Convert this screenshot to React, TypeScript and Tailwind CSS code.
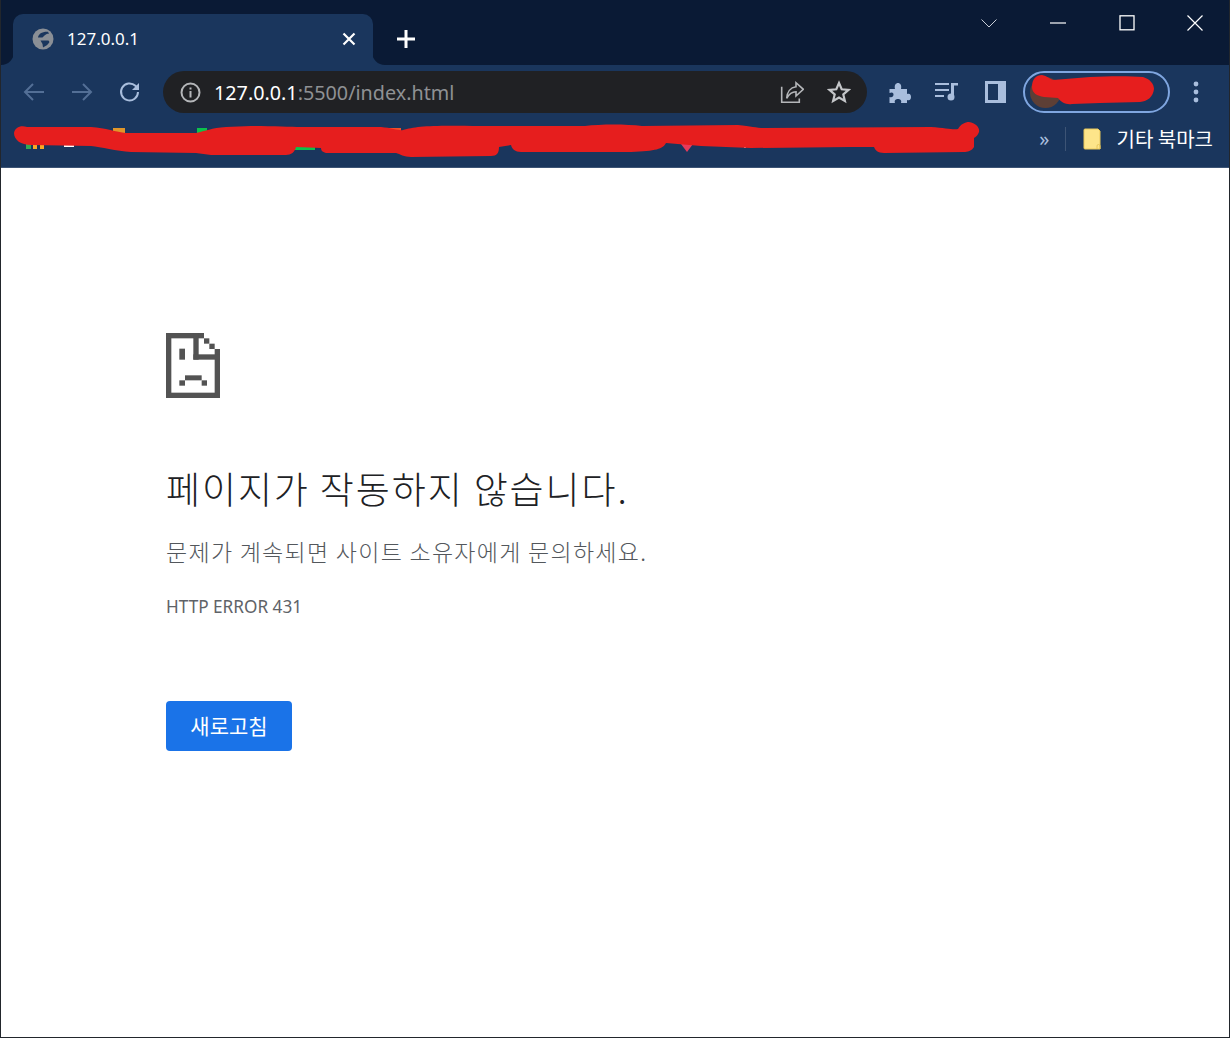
const latin = "font-['Noto_Sans','Noto_Sans_CJK_KR',sans-serif]"
const korean = "font-['Noto_Sans_CJK_KR','Noto_Sans',sans-serif]"

const TabCorner = ({ flip }: { flip?: boolean }) => (
  <svg width="13" height="13" viewBox="0 0 13 13" className="self-end shrink-0">
    <path d={flip ? "M0 0V13H13A13 13 0 0 1 0 0Z" : "M13 0V13H0A13 13 0 0 0 13 0Z"} fill="#1a365d" />
  </svg>
)

const Scribble = () => (
  <svg className="absolute left-0 top-0 pointer-events-none" width="1000" height="53" viewBox="0 115 1000 53">
    <rect x="25" y="144" width="5" height="5" fill="#34a853" />
    <rect x="32" y="144" width="4" height="5" fill="#f9a825" />
    <rect x="39" y="144" width="4" height="5" fill="#f9a825" />
    <rect x="63" y="143" width="10" height="4" fill="#fff" />
    <rect x="112" y="128" width="12" height="6" fill="#e0962a" />
    <rect x="196" y="128" width="10" height="6" fill="#0cc24c" />
    <rect x="294" y="142" width="20" height="8" fill="#0cc24c" />
    <rect x="388" y="128" width="12" height="9" fill="#f0502a" />
    <path d="M680 144h12l-6 8z" fill="#e83a5a" />
    <rect x="743" y="146" width="2" height="2" fill="#fff" />
    <path
      fill="#e61e1e"
      d="M13 133C14 127 20 125 26 127L90 127C105 128 115 132 125 133L195 133C205 131 210 128 225 127L250 126C270 126 290 127 300 127L380 127C392 128 398 131 402 130C415 126 430 125 480 126L584 126C600 124 625 124 641 126L737 125C750 126 755 128 763 128L930 127C945 128 952 130 957 129C960 124 964 122 968 122C975 123 979 128 978 132C977 135 975 137 973 138L973 147C971 151 966 152 963 152L883 153C877 153 874 150 873 147L850 147L750 148L700 146L665 143C662 149 655 151 630 152L520 152C514 152 511 149 510 145L498 147C498 153 496 156 490 156L410 157C403 157 399 154 395 153L325 153C321 152 320 150 320 148L295 147C294 152 290 155 285 155L210 155L195 153L130 152C115 151 100 147 90 146L30 145C20 145 13 140 13 133Z"
    />
  </svg>
)

const SadFile = () => (
  <svg width="54" height="65" viewBox="0 0 162 195" fill="#535353">
    <rect x="0" y="0" width="16" height="195" />
    <rect x="0" y="179" width="162" height="16" />
    <rect x="146" y="48" width="16" height="147" />
    <rect x="0" y="0" width="114" height="16" />
    <rect x="82" y="0" width="16" height="80" />
    <rect x="82" y="64" width="80" height="16" />
    <rect x="114" y="16" width="16" height="16" />
    <rect x="130" y="32" width="16" height="16" />
    <rect x="40" y="47" width="17" height="33" />
    <rect x="57" y="127" width="50" height="15" />
    <rect x="40" y="142" width="17" height="16" />
    <rect x="107" y="142" width="16" height="16" />
  </svg>
)

export default function App() {
  return (
    <div className="h-[1038px] w-[1230px] flex flex-col bg-white border-x border-b border-[#22262c] overflow-hidden">
      {/* tab strip */}
      <div className="h-[65px] shrink-0 bg-[#0a1a35] flex items-end text-white">
        <TabCorner />
        <div className={`h-[51px] w-[360px] shrink-0 -mx-px flex items-center bg-[#1a365d] rounded-t-[10px] pl-[19px] pr-[17px] pb-[2px] ${latin}`}>
          <svg width="22" height="22" viewBox="0 0 22 22">
            <circle cx="11" cy="11" r="10.5" fill="#8a8f96" />
            <path d="M6 9.500C6.500 6 10 3.500 16 3.800L17 5.800C13.500 5.800 12.500 8 10.500 9.500zM8.500 12.500H16.500L17.500 14C16 16.500 14 18 11 19.500L10.500 16z" fill="#1a365d" />
          </svg>
          <span className="ml-[13px] text-[17px] leading-none">127.0.0.1</span>
          <svg className="ml-auto" width="14" height="14" viewBox="0 0 14 14" stroke="#fff" strokeWidth="2.2">
            <path d="M1.5 1.5l11 11M12.5 1.5l-11 11" />
          </svg>
        </div>
        <TabCorner flip />
        <svg className="ml-[12px] mb-[17px]" width="18" height="18" viewBox="0 0 18 18" stroke="#fff" strokeWidth="3">
          <path d="M9 0v18M0 9h18" />
        </svg>
        <div className="ml-auto self-start flex items-center mt-[15px] pr-[26px]">
          <svg width="16" height="9" viewBox="0 0 16 9" fill="none" stroke="#c9ced8" strokeWidth="1">
            <path d="M.5.5L8 8 15.5.5" />
          </svg>
          <svg className="ml-[53px]" width="16" height="16" viewBox="0 0 16 16" stroke="#fff" strokeWidth="1.2">
            <path d="M0 8h16" />
          </svg>
          <svg className="ml-[53px]" width="16" height="16" viewBox="0 0 16 16" fill="none" stroke="#fff" strokeWidth="1.3">
            <rect x="1" y=".8" width="14" height="14" />
          </svg>
          <svg className="ml-[52px]" width="16" height="16" viewBox="0 0 16 16" stroke="#fff" strokeWidth="1.2">
            <path d="M.5.5l15 15M15.5.5l-15 15" />
          </svg>
        </div>
      </div>

      {/* toolbar */}
      <div className="h-[50px] shrink-0 bg-[#1a365d] flex items-center pl-[21px] pt-[4px]">
        <svg width="24" height="24" viewBox="0 0 24 24" fill="none" stroke="#536f96" strokeWidth="2">
          <path d="M22 12H3M11 4l-8 8 8 8" />
        </svg>
        <svg className="ml-[24px]" width="24" height="24" viewBox="0 0 24 24" fill="none" stroke="#536f96" strokeWidth="2">
          <path d="M2 12h19M13 4l8 8-8 8" />
        </svg>
        <svg className="ml-[24px]" width="24" height="24" viewBox="0 0 24 24" fill="none">
          <path d="M20 12a8.5 8.5 0 1 1-2.6-6.2L19.5 8" stroke="#a9bedd" strokeWidth="2" />
          <path d="M21 3v7h-7z" fill="#a9bedd" />
        </svg>
        <div className="ml-[21px] w-[704px] h-[42px] rounded-full bg-[#202124] flex items-center pl-[17px] pr-[16px]">
          <svg width="21" height="21" viewBox="0 0 21 21" fill="none" stroke="#b4b6b9" strokeWidth="2">
            <circle cx="10.5" cy="10.5" r="9" />
            <path d="M10.5 9v6.500M10.500 5.500v2" />
          </svg>
          <span className={`ml-[13px] pt-[2px] text-[19.75px] leading-none text-[#8f9194] ${latin}`}>
            <span className="text-white">127.0.0.1</span>:5500/index.html
          </span>
          <svg className="ml-auto" width="24" height="24" viewBox="0 0 24 24" fill="none" stroke="#b4b6b9" strokeWidth="1.6">
            <path d="M1.700 6.700V22.300H19.300V18.500" />
            <path d="M6.700 18.300C7 12 10.500 7.500 16 6.700V2.700L23.300 9.300 16 16V11.700C12 11.700 9 14 6.700 18.300Z" />
          </svg>
          <svg className="ml-[23px]" width="24" height="24" viewBox="0 0 24 24" fill="none" stroke="#c4c6c9" strokeWidth="2.2">
            <path d="M12 3l2.700 6.300 6.800.6-5.200 4.500 1.600 6.600L12 17.500 6.100 21l1.600-6.600L2.500 9.900l6.800-.6z" />
          </svg>
        </div>
        <svg className="ml-[21px]" width="24" height="24" viewBox="0 0 24 24" fill="#a9bedd">
          <path d="M1.500 9h5.500c-1-4 1-6 3-6s4 2 3 6h6v5c3-1 4 1 4 3s-1 4-4 3v3h-6c1-3-1-4-3-4s-4 1-3 4H1.500v-6c3 1 4-1 4-2.500S4.500 11.500 1.500 13z" />
        </svg>
        <svg className="ml-[23px]" width="24" height="24" viewBox="0 0 24 24" fill="#a9bedd">
          <rect x="0" y="3" width="14" height="2" />
          <rect x="0" y="9" width="14" height="2" />
          <rect x="0" y="15" width="9" height="2" />
          <circle cx="16" cy="17" r="3.500" />
          <path d="M16 3h7v2.500h-4V17h-3z" />
        </svg>
        <svg className="ml-[26px]" width="21" height="22" viewBox="0 0 21 22">
          <rect width="21" height="22" fill="#a9bedd" />
          <rect x="3" y="3" width="10" height="16" fill="#1a365d" />
        </svg>
        <div className="relative ml-[17px] w-[147px] h-[42px] rounded-full border-2 border-[#7fa6e0] flex items-center pl-[5px]">
          <div className="w-[31px] h-[31px] rounded-full bg-[#5d3f36]" />
          <svg className="absolute left-[5px] top-[2px]" width="126" height="33" viewBox="0 0 126 33">
            <path
              fill="#e61e1e"
              d="M2 12C2 4 6 0 12 0C17 1 20 4 23 5L60 2C80 1 100 1 113 2C120 4 124 9 124 14C123 22 118 26 110 27L70 28L42 29C36 30 31 27 28 23L14 22C7 21 2 18 2 12Z"
            />
          </svg>
        </div>
        <svg className="ml-[21px]" width="10" height="22" viewBox="0 0 10 22" fill="#a9bedd">
          <circle cx="5" cy="3" r="2.400" />
          <circle cx="5" cy="11" r="2.400" />
          <circle cx="5" cy="19" r="2.400" />
        </svg>
      </div>

      {/* bookmarks bar */}
      <div className="relative h-[53px] shrink-0 bg-[#1a365d] border-b border-[#3d5475] flex items-center justify-end pr-[16px] pb-[5px] text-white">
        <Scribble />
        <span className={`text-[20px] leading-none text-[#a9bedd] ${latin}`}>»</span>
        <div className="ml-[15px] w-px h-[24px] bg-[#3d5475]" />
        <svg className="ml-[17px]" width="18" height="22" viewBox="0 0 18 22">
          <path d="M1 2a1 1 0 0 1 1-1h13l2 2v18H2a1 1 0 0 1-1-1z" fill="#fde58a" stroke="#e8c75a" />
          <path d="M14 21v-3a1.500 1.500 0 0 1 3 0v3" fill="none" stroke="#e8c75a" />
        </svg>
        <span className={`ml-[16px] text-[20px] leading-none ${korean}`}>기타 북마크</span>
      </div>

      {/* error page */}
      <main className={`flex-1 pl-[165px] pt-[165px] ${korean}`}>
        <SadFile />
        <h1 className="mt-[65px] text-[37px] tracking-[1.9px] leading-[50px] font-light text-[#202124]">페이지가 작동하지 않습니다.</h1>
        <p className="mt-[23px] text-[23px] tracking-[1.28px] leading-[30px] font-light text-[#53575c]">문제가 계속되면 사이트 소유자에게 문의하세요.</p>
        <p className={`mt-[29px] text-[17.2px] leading-[24px] text-[#5f6368] ${latin}`}>HTTP ERROR 431</p>
        <button className="mt-[82px] w-[126px] h-[50px] rounded-[4px] bg-[#1a73e8] text-white text-[21px]">새로고침</button>
      </main>
    </div>
  )
}
